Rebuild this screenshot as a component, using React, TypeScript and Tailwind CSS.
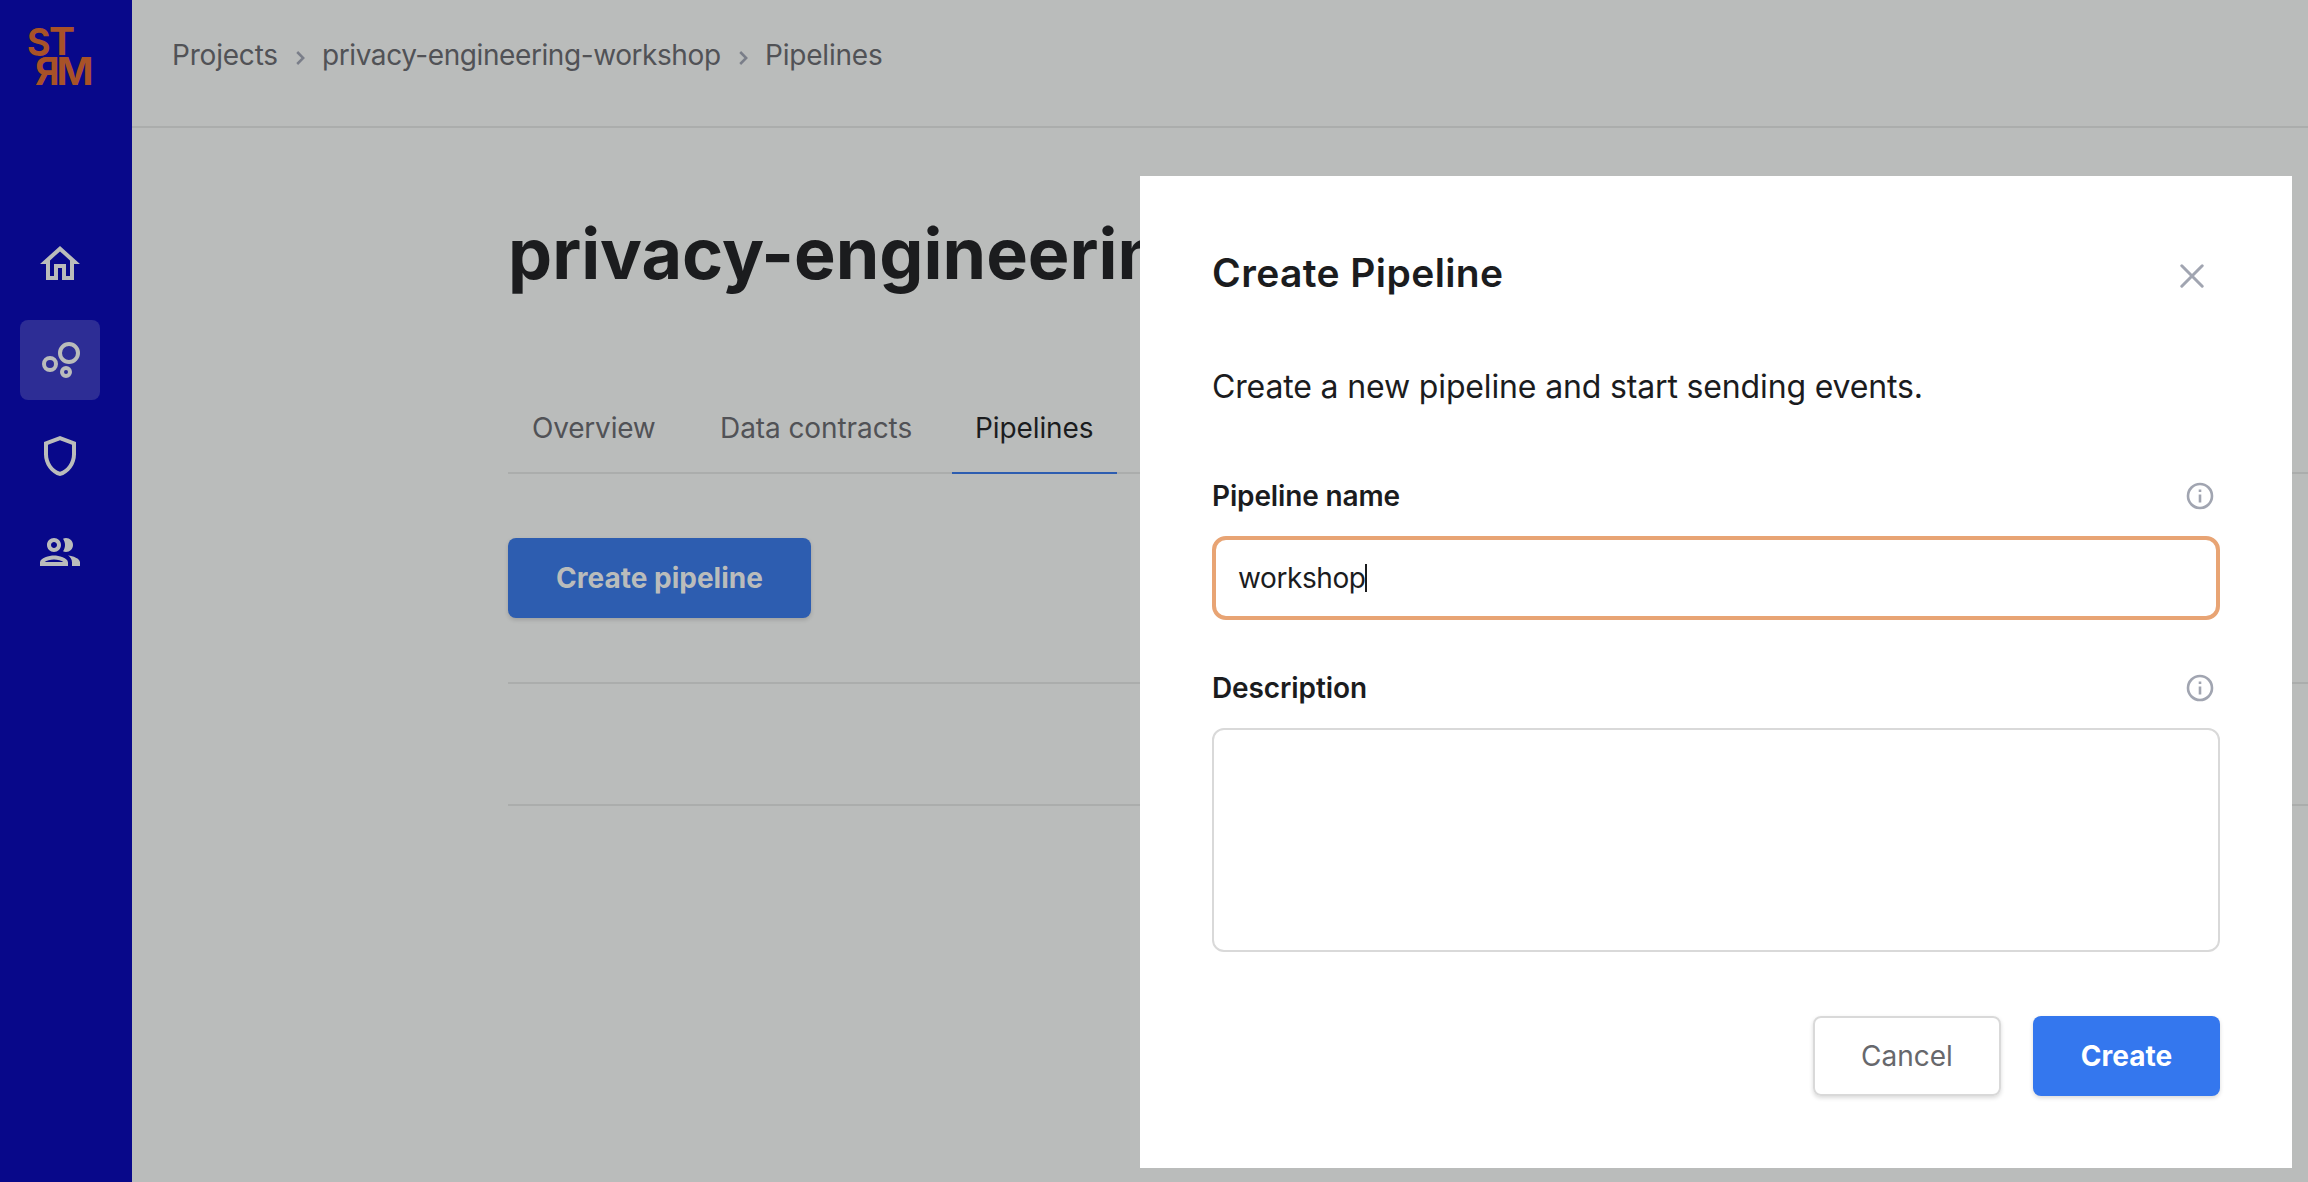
import type { ReactNode } from "react";

const icon = "size-12 fill-current";

function HomeIcon() {
  return (
    <svg viewBox="0 0 24 24" className={icon}>
      <path d="M12 5.69l5 4.5V18h-2v-6H9v6H7v-7.81l5-4.5M12 3L2 12h3v8h6v-6h2v6h6v-8h3L12 3z" />
    </svg>
  );
}

function BubblesIcon() {
  return (
    <svg viewBox="0 0 24 24" className="size-12 fill-none stroke-current stroke-2">
      <circle cx="7" cy="14" r="3" />
      <circle cx="15" cy="18" r="2" />
      <circle cx="16.5" cy="8.5" r="4.5" />
    </svg>
  );
}

function ShieldIcon() {
  return (
    <svg viewBox="0 0 24 24" className={icon}>
      <path d="M12 2L4 5v6.09c0 5.05 3.41 9.76 8 10.91 4.59-1.15 8-5.86 8-10.91V5l-8-3zm6 9.09c0 4-2.55 7.7-6 8.83-3.45-1.13-6-4.82-6-8.83v-4.7l6-2.25 6 2.25v4.7z" />
    </svg>
  );
}

function PeopleIcon() {
  return (
    <svg viewBox="0 0 24 24" className={icon}>
      <path d="M9 13.75c-2.34 0-7 1.17-7 3.5V19h14v-1.75c0-2.33-4.66-3.5-7-3.5zM4.34 17c.84-.58 2.87-1.25 4.66-1.25s3.82.67 4.66 1.25H4.34zM9 12c1.93 0 3.5-1.57 3.5-3.5S10.93 5 9 5 5.5 6.57 5.5 8.5 7.07 12 9 12zm0-5c.83 0 1.5.67 1.5 1.5S9.83 10 9 10s-1.5-.67-1.5-1.5S8.17 7 9 7zm7.04 6.81c1.16.84 1.96 1.96 1.96 3.44V19h4v-1.75c0-2.02-3.5-3.17-5.96-3.44zM15 12c1.93 0 3.5-1.57 3.5-3.5S16.93 5 15 5c-.54 0-1.04.13-1.5.35.63.89 1 1.98 1 3.15s-.37 2.26-1 3.15c.46.22.96.35 1.5.35z" />
    </svg>
  );
}

function Logo() {
  return (
    <svg viewBox="0 0 64 60" className="h-[60px] w-16 overflow-visible fill-[#a85228] font-['Inter',sans-serif] text-[38.5px] font-bold">
      <text x="-1" y="28.5" textLength="23.5" lengthAdjust="spacingAndGlyphs">S</text>
      <text x="21" y="28" textLength="26" lengthAdjust="spacingAndGlyphs">T</text>
      <text x="-31.5" y="58" textLength="24.5" lengthAdjust="spacingAndGlyphs" transform="scale(-1 1)">R</text>
      <text x="28.5" y="58" textLength="37" lengthAdjust="spacingAndGlyphs">M</text>
    </svg>
  );
}

function Chevron() {
  return (
    <svg viewBox="0 0 9 14" className="mt-[5px] h-3.5 w-[9px] fill-none stroke-[#7a7e89] stroke-[2.5]">
      <path d="M1.2 1l6 6-6 6" />
    </svg>
  );
}

function InfoIcon() {
  return (
    <svg viewBox="0 0 28 28" className="mr-1.5 size-7 fill-none stroke-[#a1a5b1] stroke-[2.6]">
      <circle cx="14" cy="14" r="12" />
      <path d="M14 12.6v8M14 7.4v2.6" />
    </svg>
  );
}

function NavItem({ active, children }: { active?: boolean; children: ReactNode }) {
  return (
    <a className={active ? "flex size-20 items-center justify-center rounded-lg bg-[#2d2d95]" : "flex size-20 items-center justify-center"}>
      {children}
    </a>
  );
}

function FieldLabel({ children }: { children: ReactNode }) {
  return (
    <div className="flex h-7 items-center justify-between">
      {children}
      <InfoIcon />
    </div>
  );
}

export default function App() {
  return (
    <div className="relative flex h-[1182px] w-[2308px] overflow-hidden bg-[#babcbb] font-['Inter',sans-serif] text-[28px] font-normal leading-8 text-[#1b1c1e]">
      <aside className="flex w-[132px] shrink-0 flex-col bg-[#08088a] text-[#babcbb]">
        <div className="flex h-[224px] pl-[28px] pt-[27px]">
          <Logo />
        </div>
        <nav className="flex flex-col gap-4 pl-5">
          <NavItem><HomeIcon /></NavItem>
          <NavItem active><BubblesIcon /></NavItem>
          <NavItem><ShieldIcon /></NavItem>
          <NavItem><PeopleIcon /></NavItem>
        </nav>
      </aside>

      <main className="min-w-0 flex-1">
        <header className="flex h-32 items-center border-b-2 border-[#abadac] pb-4 pl-10 text-[#515256]">
          <span className="w-[124px] shrink-0 tracking-[-0.2px]">Projects</span>
          <Chevron />
          <span className="ml-[17px] w-[417px] shrink-0 tracking-[-0.42px]">privacy-engineering-workshop</span>
          <Chevron />
          <span className="ml-[17px] tracking-[-0.2px]">Pipelines</span>
        </header>

        <section className="pl-[376px]">
          <h1 className="whitespace-nowrap pt-[86px] text-[70px] font-bold leading-[80px]">
            privacy-engineering-workshop
          </h1>
          <div className="mt-[86px] flex h-[94px] border-b-2 border-[#abadac] text-[#515256]">
            <span className="mr-4 w-[172px] pl-6 pt-8 tracking-[-0.2px]">Overview</span>
            <span className="mr-4 w-[240px] pl-6 pt-8 tracking-[-0.08px]">Data contracts</span>
            <span className="-mb-0.5 w-[165px] border-b-2 border-[#2d5db0] pl-[23px] pt-8 tracking-[-0.1px] text-[#1b1c1e]">
              Pipelines
            </span>
          </div>
          <button className="mt-16 flex h-20 w-[303px] items-center justify-center rounded-lg bg-[#2d5db0] font-bold text-[#babcbb] shadow-[0_2px_4px_rgba(0,0,0,0.15)]">
            Create pipeline
          </button>
          <div className="mt-16 h-[124px] border-y-2 border-[#abadac]" />
        </section>
      </main>

      <div role="dialog" className="absolute left-[1140px] top-[176px] flex h-[992px] w-[1152px] flex-col bg-white px-[72px] text-[#1b1c1e]">
        <div className="flex items-center justify-between pt-[74px]">
          <h2 className="text-[39px] font-semibold leading-[46px] tracking-[0.4px]">Create Pipeline</h2>
          <svg viewBox="0 0 24 24" className="mr-4 mt-1.5 size-6 fill-none stroke-[#a1a5b1] stroke-3 [stroke-linecap:round]">
            <path d="M1.8 1.8l20.4 20.4M22.2 1.8L1.8 22.2" />
          </svg>
        </div>
        <p className="mt-[71px] text-[32px] leading-10 tracking-[-0.15px]">Create a new pipeline and start sending events.</p>

        <div className="mt-[75px]">
          <FieldLabel>
            <span className="font-semibold tracking-[-0.15px]">Pipeline name</span>
          </FieldLabel>
          <div className="mt-[26px] flex h-[84px] items-center rounded-[14px] border-4 border-[#e8a474] pl-[22px]">
            <span className="w-[128px] tracking-[-0.4px]">workshop</span>
            <span className="-ml-px h-7 w-0.5 bg-[#1b1c1e]" />
          </div>
        </div>

        <div className="mt-[54px]">
          <FieldLabel>
            <span className="font-semibold tracking-[-0.1px]">Description</span>
          </FieldLabel>
          <div className="mt-[26px] h-56 rounded-xl border-2 border-[#d9d9d9]" />
        </div>

        <div className="mt-16 flex justify-end gap-8">
          <button className="h-20 w-[188px] rounded-lg border-2 border-[#d9d9d9] text-[#67686c] shadow-[0_2px_4px_rgba(0,0,0,0.15)]">
            Cancel
          </button>
          <button className="h-20 w-[187px] rounded-lg bg-[#3477ee] font-bold text-white shadow-[0_2px_4px_rgba(0,0,0,0.15)]">
            Create
          </button>
        </div>
      </div>
    </div>
  );
}
